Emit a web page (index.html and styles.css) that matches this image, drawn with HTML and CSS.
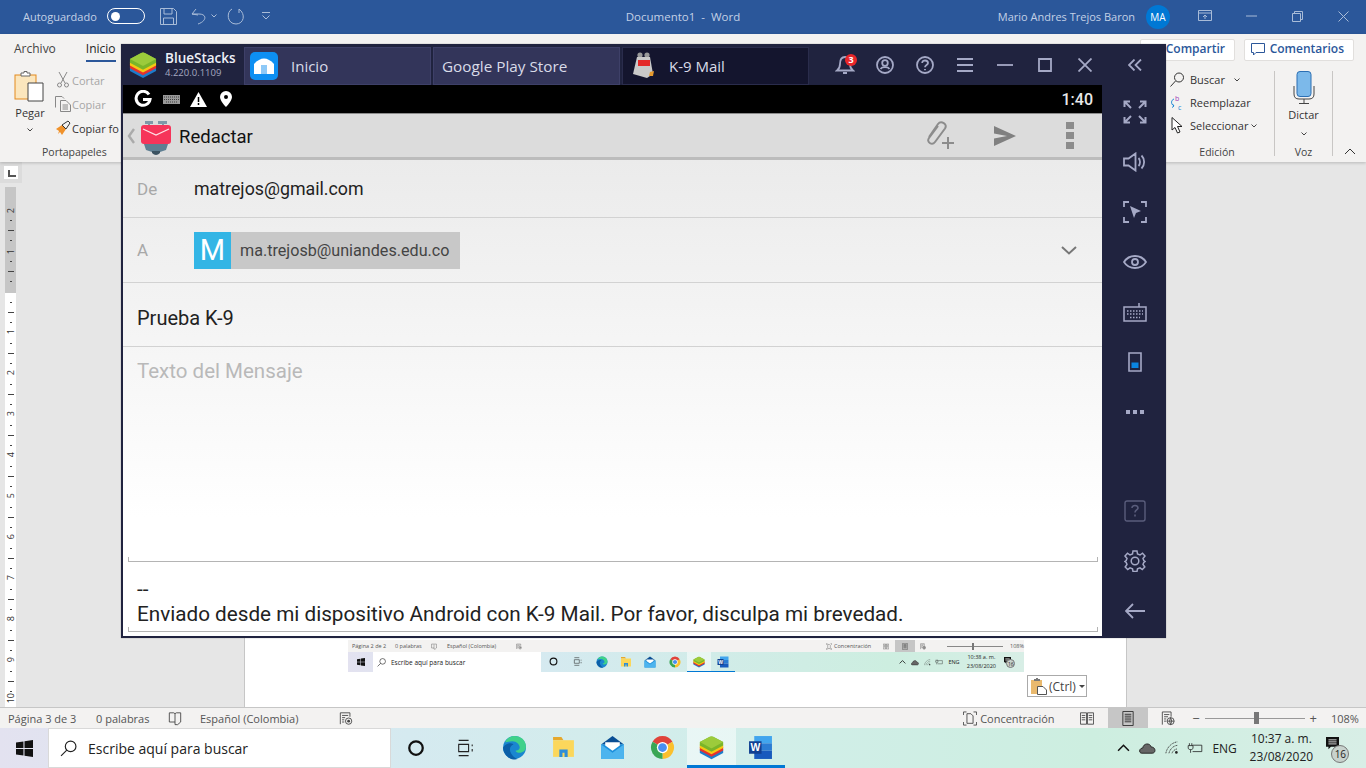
FILE: index.html
```html
<!DOCTYPE html>
<html lang="es">
<head>
    <meta charset="UTF-8">
    <meta name="viewport" content="width=device-width, initial-scale=1.0">
    <title>Documento1 - Word</title>
    <link rel="stylesheet" href="styles.css">
</head>
<body>
    <!-- iconos compartidos -->
    <svg class="sprites" aria-hidden="true">
        <symbol id="i-win" viewBox="0 0 16 16"><path fill="currentColor" d="M0 2.3 7 1.3V7.5H0ZM8 1.1 16 0V7.5H8ZM0 8.5H7V14.7L0 13.7ZM8 8.5H16V16L8 14.9Z"/></symbol>
        <symbol id="i-search" viewBox="0 0 16 16"><g fill="none" stroke="#222" stroke-width="1.1"><circle cx="10" cy="6" r="5"/><path d="M6.4 9.6 1 15"/></g></symbol>
        <symbol id="i-cortana" viewBox="0 0 16 16"><circle cx="8" cy="8" r="6" fill="none" stroke="#111" stroke-width="2"/></symbol>
        <symbol id="i-taskview" viewBox="0 0 20 20"><g fill="none" stroke="#222" stroke-width="1.2"><path d="M3 1.5H14M3 18.5H14M3 6H14V14H3ZM18 6V8M18 11V14"/></g></symbol>
        <symbol id="i-edge" viewBox="0 0 24 24"><circle cx="12" cy="12" r="11" fill="#1a86d0"/><path fill="#3fd18a" d="M3 7C5 2 10 1 12 1c6 0 11 4 11 10 0 4-3 6-6 6-2 0-4-1-4-2 3 0 4-2 4-3 0-3-3-6-7-6-3 0-6 1-7 1Z"/><path fill="#0b5fa8" d="M1 12c2-3 5-4 7-4 2 0 3 1 3 1-3 1-4 4-3 7s4 6 7 7c-2 .5-3 .5-4 .5C6 23 1 18 1 12Z"/></symbol>
        <symbol id="i-folder" viewBox="0 0 24 24"><path fill="#e6a82d" d="M2 2H10L12 5H2Z"/><path fill="#fbd75b" d="M2 5H22V21H2Z"/><path fill="#2f8ed8" d="M8 21V14H16V21H13V17H11V21Z"/></symbol>
        <symbol id="i-mail" viewBox="0 0 24 24"><path fill="#0a4e94" d="M12 1 23 9H1Z"/><path fill="#1b8fdc" d="M1 9H23V23H1Z"/><path fill="#fff" d="M5 7H19V10L12 15 5 10Z"/><path fill="#4db4ee" d="M1 9 12 17 23 9V23H1Z"/></symbol>
        <symbol id="i-chrome" viewBox="0 0 24 24"><path fill="#e0433a" d="M12 12 2.47 6.5A11 11 0 0 1 21.53 6.5Z"/><path fill="#fbc02d" d="M12 12 21.53 6.5A11 11 0 0 1 12 23Z"/><path fill="#3aa655" d="M12 12 12 23A11 11 0 0 1 2.47 6.5Z"/><circle cx="12" cy="12" r="5.4" fill="#fff"/><circle cx="12" cy="12" r="4.2" fill="#4a8ff0"/></symbol>
        <symbol id="i-bs" viewBox="0 0 30 30"><path fill="#1d7ccc" d="M1 17 15 10 29 17V21.5L15 29 1 21.5Z"/><path fill="#e5322d" d="M1 14 15 7 29 14V18.5L15 26 1 18.5Z"/><path fill="#f5c913" d="M1 11.5 15 5 29 11.5V15.5L15 23 1 15.5Z"/><path fill="#79b52a" d="M1 8.5 13 2.2Q15 1.2 17 2.2L29 8.5V12.5L15 20 1 12.5Z"/><path fill="#9ccb3b" d="M1 8.5 13 2.2Q15 1.2 17 2.2L29 8.5 16 15.5Q15 16 14 15.5Z"/></symbol>
        <symbol id="i-word" viewBox="0 0 24 24"><path fill="#41a5ee" d="M6 1H23V8H6Z"/><path fill="#2b7cd3" d="M6 8H23V15H6Z"/><path fill="#185abd" d="M6 15H23V23H6Z"/><path fill="#103f91" d="M1 6H13V18H1Z"/></symbol>
        <symbol id="i-book" viewBox="0 0 16 16"><path fill="none" stroke="#444" d="M1.5 1.5H6.5L8 2.5 9.5 1.5H14.5V12L11 15H8L8 2.5M8 12H1.5V1.5"/></symbol>
        <symbol id="i-macro" viewBox="0 0 16 16"><g fill="none" stroke="#444"><path d="M1.5 14.5V1.5H12.5V6M3.5 4.5H10.5M3.5 7H7M3.5 9.5H6M3.5 12H6"/><circle cx="11" cy="11" r="3.6"/></g><circle cx="11" cy="11" r="1.6" fill="#444"/></symbol>
        <symbol id="i-focus" viewBox="0 0 16 16"><path fill="none" stroke="#444" d="M.5 4V.5H4M12 .5H15.5V4M15.5 12V15.5H12M4 15.5H.5V12M4.5 2.5H9L11.5 5V13.5H4.5Z"/></symbol>
        <symbol id="i-read" viewBox="0 0 16 16"><path fill="none" stroke="#444" d="M.5 1.5H7.5V14.5H.5ZM8.5 1.5H15.5V14.5H8.5ZM2 4.5H6M2 7H6M2 9.5H6M10 4.5H14M10 7H14M10 9.5H14"/></symbol>
        <symbol id="i-print" viewBox="0 0 14 16"><path fill="none" stroke="#333" d="M1.5 .5H12.5V15.5H1.5ZM3.5 3.5H10.5M3.5 5.5H10.5M3.5 7.5H10.5M3.5 9.5H10.5M3.5 11.5H10.5"/></symbol>
        <symbol id="i-web" viewBox="0 0 16 16"><g fill="none" stroke="#444"><path d="M1.5 15V.5H11.5V6M3.5 3.5H9.5M3.5 6H8M3.5 8.5H6M3.5 11H6"/><circle cx="11" cy="11" r="4"/><path d="M7 11H15M11 7Q8.500 11 11 15Q13.500 11 11 7"/></g></symbol>
        <symbol id="i-cloud" viewBox="0 0 18 14"><path fill="#666" stroke="#222" d="M3 12.500C-.5 12.500 0 7 4 7 4.500 2 11.500 1 13 6 18 6 18 12.500 14 12.500Z"/></symbol>
        <symbol id="i-wifi" viewBox="0 0 16 16"><path fill="none" stroke="#333" stroke-dasharray="1.400 .7" d="M1 14C2 8 7 2 14 1M4.500 14C5.500 10 9 5.500 14 5M8 14C8.500 12 11 9.500 14 9"/><circle cx="13" cy="13" r="1.500" fill="#222"/></symbol>
        <symbol id="i-batt" viewBox="0 0 20 14"><path fill="none" stroke="#222" d="M7 3.500H18.500V11.500H7M3 1V4M6 1V4M1.500 4H7.500V7C7.500 8.500 6 9 4.500 9S1.500 8.500 1.500 7ZM4.500 9V13"/></symbol>
        <symbol id="i-notif" viewBox="0 0 16 16"><path fill="#111" d="M0 0H16V12H6L3 15V12H0Z"/><path stroke="#fff" d="M3 3.500H13M3 6H13M3 8.500H13"/></symbol>
        <symbol id="i-k9" viewBox="0 0 30 36"><path fill="#7e98a8" d="M4 1H12V4H9V7H7V4H4ZM17 1H26V4H23V7H21V4H17Z"/><path fill="#5f7f92" d="M1 18H29L25 30 19 32H11L5 30Z"/><path fill="#3c5361" d="M11 31H19V33Q15 37 11 33Z"/><rect x="0" y="5" width="30" height="19" rx="3" fill="#f6345a"/><path fill="none" stroke="#fff" stroke-width="1.300" d="M2 9 15 15 28 9" opacity=".85"/></symbol>
    </svg>

    <div class="word">
        <header class="titlebar">
            <div class="tb-left">
                <span class="autosave">Autoguardado</span>
                <span class="toggle"><i></i></span>
                <svg class="qa qa-save" viewBox="0 0 17 17"><path d="M.5.5H13.500L16.500 3.500V16.500H.5ZM4 .5V6H12V.5M3.500 16.500V10H13.500V16.500"/></svg>
                <svg class="qa qa-undo" viewBox="0 0 16 18"><path d="M1 7 5 2M1 7 7 8M1 7H8C16 7 16 14 7 17"/></svg>
                <svg class="qa qa-chev" viewBox="0 0 6 4"><path d="M.5.5 3 3 5.500.5"/></svg>
                <svg class="qa qa-redo" viewBox="0 0 18 18"><path d="M5 2C-1 5 0 17 9 17 17 17 19 7 12 2M12 2V6"/></svg>
                <svg class="qa qa-more" viewBox="0 0 8 8"><path d="M0 .5H8M.5 3.500 4 7 7.500 3.500"/></svg>
            </div>
            <div class="tb-title">Documento1&nbsp; -&nbsp; Word</div>
            <div class="tb-right">
                <span class="user">Mario Andres Trejos Baron</span>
                <span class="avatar">MA</span>
                <span class="winbtn"><svg class="qa" width="14" height="12" viewBox="0 0 14 12"><path d="M.5.500H13.500V10.500H.5ZM.5 3H13.500M7 9V5M5 7 7 5 9 7"/></svg></span>
                <span class="winbtn"><svg class="qa" width="11" height="2" viewBox="0 0 11 2"><path d="M0 1H11"/></svg></span>
                <span class="winbtn"><svg class="qa" width="11" height="11" viewBox="0 0 11 11"><path d="M.5 2.500H8.500V10.500H.5ZM2.500 2.500V.5H10.500V8.500H8.500"/></svg></span>
                <span class="winbtn"><svg class="qa" width="11" height="11" viewBox="0 0 11 11"><path d="M.5.5 10.500 10.500M10.500.5 .5 10.500"/></svg></span>
            </div>
        </header>

        <section class="ribbon">
            <div class="rb-tabs">
                <div class="rb-tabs-left">
                    <span class="rb-tab">Archivo</span>
                    <span class="rb-tab active">Inicio</span>
                </div>
                <div class="rb-tabs-right">
                    <span class="rb-btn share">Compartir</span>
                    <span class="rb-btn comments">
                        <svg width="14" height="13" viewBox="0 0 14 13"><path fill="none" stroke="#2b579a" d="M.5.5H13.500V9.500H5L2.500 12V9.500H.5Z"/></svg>
                        Comentarios
                    </span>
                </div>
            </div>
            <div class="rb-body">
                <div class="rb-group clip">
                    <div class="clip-main">
                        <div class="paste">
                            <svg width="32" height="32" viewBox="0 0 32 32"><rect x="1" y="4" width="21" height="24" fill="#fbe6bd" stroke="#e38a1f"/><path fill="#fff" stroke="#666" d="M7 5V2H10V0.500H13V2H16V5Z"/><path fill="#fff" stroke="#444" d="M14 12H29V30H14Z"/></svg>
                            <span class="paste-label">Pegar</span>
                            <svg class="chev" viewBox="0 0 6 4"><path d="M.5.5 3 3 5.500.5"/></svg>
                        </div>
                        <ul class="clip-list">
                            <li class="off"><svg width="14" height="16" viewBox="0 0 14 16"><g fill="none" stroke="#888"><path d="M3 0 9 11M11 0 5 11"/><circle cx="3.500" cy="13" r="2"/><circle cx="10.500" cy="13" r="2"/></g></svg>Cortar</li>
                            <li class="off"><svg width="16" height="16" viewBox="0 0 16 16"><path fill="none" stroke="#888" d="M.5 11.500V.5H7L9 2.500M5.500 4.500H11L15.500 9V15.500H5.500ZM7.500 9H13M7.500 11H13M7.500 13H13"/></svg>Copiar</li>
                            <li><svg width="16" height="16" viewBox="0 0 16 16"><path fill="#f0922b" d="M1 9 7 5 11 9 7 15 5 12 3 14 4 11Z"/><path fill="none" stroke="#333" d="M7 5 11 9 15 3 13 1Z"/></svg>Copiar fo</li>
                        </ul>
                    </div>
                    <div class="rb-label">Portapapeles</div>
                </div>
                <div class="rb-right">
                    <div class="rb-group edit">
                        <ul class="edit-list">
                            <li><svg width="14" height="15" viewBox="0 0 14 15"><g fill="none" stroke="#333"><circle cx="9" cy="5.500" r="4.500"/><path d="M5.500 9 .5 14.500"/></g></svg>Buscar<svg class="chev near" viewBox="0 0 6 4"><path d="M.5.5 3 3 5.500.5"/></svg></li>
                            <li><svg width="14" height="19" viewBox="0 0 14 19"><path fill="none" stroke="#1e88d6" d="M4 6C1 7 .5 11 4 13M2.500 11 4 13 2 14.500"/><text x="5" y="7.500" class="rp-b">b</text><text x="8" y="17" class="rp-c">c</text></svg>Reemplazar</li>
                            <li><svg width="14" height="17" viewBox="0 0 14 17"><path fill="#fff" stroke="#222" d="M2 .5V13L5 10.500 7.500 16 10 15 7.500 9.500H12Z"/></svg>Seleccionar<svg class="chev tight" viewBox="0 0 6 4"><path d="M.5.5 3 3 5.500.5"/></svg></li>
                        </ul>
                        <div class="rb-label">Edición</div>
                    </div>
                    <div class="rb-group voz">
                        <div class="dictar">
                            <svg width="22" height="34" viewBox="0 0 22 34"><rect x="4" y=".5" width="14" height="25" rx="3" fill="#7cb9ea" stroke="#2b6fb3"/><path fill="none" stroke="#444" d="M1 15V23Q1 28 6 28H16Q21 28 21 23V15M11 28V32M6 32.500H16"/></svg>
                            <span class="paste-label">Dictar</span>
                            <svg class="chev" viewBox="0 0 6 4"><path d="M.5.5 3 3 5.500.5"/></svg>
                        </div>
                        <div class="rb-label">Voz</div>
                    </div>
                    <div class="rb-collapse">
                        <svg width="12" height="7" viewBox="0 0 12 7"><path fill="none" stroke="#333" d="M1 6 6 1 11 6"/></svg>
                    </div>
                </div>
            </div>
        </section>

        <main class="docarea">
            <div class="gutter">
                <div class="ruler-corner"><span class="ruler-tab"></span></div>
                <div class="ruler">
                    <div class="ruler-top">
                        <span class="rnum"><b>2</b></span>
                        <span class="rnum"><b>1</b></span>
                    </div>
                    <div class="ruler-bot">
                        <span class="rnum"><b>1</b></span>
                        <span class="rnum"><b>2</b></span>
                        <span class="rnum"><b>3</b></span>
                        <span class="rnum"><b>4</b></span>
                        <span class="rnum"><b>5</b></span>
                        <span class="rnum"><b>6</b></span>
                        <span class="rnum"><b>7</b></span>
                        <span class="rnum"><b>8</b></span>
                        <span class="rnum"><b>9</b></span>
                        <span class="rnum"><b>10</b></span>
                    </div>
                </div>
            </div>
            <div class="page">
                <!-- captura pegada en el documento -->
                <div class="shot">
                    <div class="shot-status">
                        <span class="ms-a">Página 2 de 2</span>
                        <span class="ms-b">0 palabras</span>
                        <svg class="ms-book"><use href="#i-book"/></svg>
                        <span class="ms-c">Español (Colombia)</span>
                        <svg class="ms-macro"><use href="#i-macro"/></svg>
                        <span class="grow"></span>
                        <svg class="ms-ico"><use href="#i-focus"/></svg>
                        <span class="ms-d">Concentración</span>
                        <svg class="ms-ico ms-read"><use href="#i-read"/></svg>
                        <span class="ms-tile"><svg class="ms-ico"><use href="#i-print"/></svg></span>
                        <svg class="ms-ico ms-web"><use href="#i-web"/></svg>
                        <span class="ms-zoom"><i></i></span>
                        <span class="ms-e">108%</span>
                    </div>
                    <div class="taskbar mini">
                        <span class="tb-start"><svg><use href="#i-win"/></svg></span>
                        <span class="tb-search"><svg><use href="#i-search"/></svg>Escribe aquí para buscar</span>
                        <span class="tb-app"><svg class="sm"><use href="#i-cortana"/></svg></span>
                        <span class="tb-app"><svg class="sm"><use href="#i-taskview"/></svg></span>
                        <span class="tb-app"><svg><use href="#i-edge"/></svg></span>
                        <span class="tb-app"><svg><use href="#i-folder"/></svg></span>
                        <span class="tb-app"><svg><use href="#i-mail"/></svg></span>
                        <span class="tb-app"><svg><use href="#i-chrome"/></svg></span>
                        <span class="tb-app on"><svg><use href="#i-bs"/></svg></span>
                        <span class="tb-app open"><svg viewBox="0 0 24 24"><use href="#i-word"/><text x="7" y="15.800" text-anchor="middle" class="word-w">W</text></svg></span>
                        <span class="tray">
                            <svg class="t-up" viewBox="0 0 12 7"><path fill="none" stroke="#111" stroke-width="1.400" d="M1 6 6 1 11 6"/></svg>
                            <svg class="t-cloud"><use href="#i-cloud"/></svg>
                            <svg class="t-wifi"><use href="#i-wifi"/></svg>
                            <svg class="t-batt"><use href="#i-batt"/></svg>
                            <span class="t-lang">ENG</span>
                            <span class="t-clock"><span>10:38 a. m.</span><span>23/08/2020</span></span>
                            <span class="t-notif"><svg><use href="#i-notif"/></svg><em>16</em></span>
                        </span>
                    </div>
                </div>
                <div class="paste-tip">
                    <svg width="16" height="17" viewBox="0 0 16 17"><path fill="#e9b96e" d="M0 2H11V16H0Z"/><path fill="#777" d="M3 3V1H5V0H7V1H9V3Z"/><path fill="#fff" stroke="#555" d="M6.500 8.500H12L15.500 12V16.500H6.500Z"/></svg>
                    <span>(Ctrl)</span>
                    <i class="caret"></i>
                </div>
            </div>
            <div class="docfill"></div>
        </main>

        <footer class="statusbar">
            <span class="st-a">Página 3 de 3</span>
            <span class="st-b">0 palabras</span>
            <svg class="st-ico st-book"><use href="#i-book"/></svg>
            <span class="st-c">Español (Colombia)</span>
            <svg class="st-ico st-macro"><use href="#i-macro"/></svg>
            <span class="grow"></span>
            <svg class="st-ico"><use href="#i-focus"/></svg>
            <span class="st-d">Concentración</span>
            <svg class="st-ico st-read"><use href="#i-read"/></svg>
            <span class="st-tile"><svg class="st-ico"><use href="#i-print"/></svg></span>
            <svg class="st-ico st-web"><use href="#i-web"/></svg>
            <span class="st-zoom"><b>−</b><span class="st-track"><i></i></span><b>+</b></span>
            <span class="st-e">108%</span>
        </footer>

        <nav class="taskbar">
            <span class="tb-start"><svg><use href="#i-win"/></svg></span>
            <span class="tb-search"><svg><use href="#i-search"/></svg>Escribe aquí para buscar</span>
            <span class="tb-app"><svg class="sm"><use href="#i-cortana"/></svg></span>
            <span class="tb-app"><svg class="sm"><use href="#i-taskview"/></svg></span>
            <span class="tb-app"><svg><use href="#i-edge"/></svg></span>
            <span class="tb-app"><svg><use href="#i-folder"/></svg></span>
            <span class="tb-app"><svg><use href="#i-mail"/></svg></span>
            <span class="tb-app"><svg><use href="#i-chrome"/></svg></span>
            <span class="tb-app on"><svg><use href="#i-bs"/></svg></span>
            <span class="tb-app open"><svg viewBox="0 0 24 24"><use href="#i-word"/><text x="7" y="15.800" text-anchor="middle" class="word-w">W</text></svg></span>
            <span class="tray">
                <svg class="t-up" viewBox="0 0 12 7"><path fill="none" stroke="#111" stroke-width="1.400" d="M1 6 6 1 11 6"/></svg>
                <svg class="t-cloud"><use href="#i-cloud"/></svg>
                <svg class="t-wifi"><use href="#i-wifi"/></svg>
                <svg class="t-batt"><use href="#i-batt"/></svg>
                <span class="t-lang">ENG</span>
                <span class="t-clock"><span>10:37 a. m.</span><span>23/08/2020</span></span>
                <span class="t-notif"><svg><use href="#i-notif"/></svg><em>16</em></span>
            </span>
        </nav>
    </div>

    <!-- ventana de BlueStacks sobre Word -->
    <div class="bs">
        <div class="bs-title">
            <svg class="bs-logo"><use href="#i-bs"/></svg>
            <div class="bs-brand">
                <strong>BlueStacks</strong>
                <span>4.220.0.1109</span>
            </div>
            <div class="bs-tab first">
                <span class="home"><svg width="20" height="16" viewBox="0 0 20 16"><path fill="#fff" d="M0 6Q10-5 20 6V16H0Z"/><path fill="#8ec9f7" d="M7 7H13V16H7Z"/></svg></span>
                <span>Inicio</span>
            </div>
            <div class="bs-tab store"><span>Google Play Store</span></div>
            <div class="bs-tab current">
                <svg width="24" height="28" viewBox="0 0 24 28"><circle cx="8" cy="3" r="2.600" fill="#999"/><circle cx="15" cy="3" r="2.600" fill="#999"/><path fill="#c9c9c9" d="M5 5H18L21 22 15 26 8 24 1 22Z"/><path fill="#e32929" d="M6 8H18V14H6Z"/><path fill="#e69a2e" d="M18 20 22 19 21 24 17 24Z"/></svg>
                <span>K-9 Mail</span>
            </div>
            <div class="bs-tools">
                <span class="bs-tool bell">
                    <svg width="20" height="20" viewBox="0 0 20 20"><path d="M10 2C5.500 2 5 6 5 9S4 14 2 15.500H18C16 14 15 12 15 9S14.500 2 10 2ZM8 18H12"/></svg>
                    <em>3</em>
                </span>
                <span class="bs-tool"><svg width="18" height="18" viewBox="0 0 18 18"><circle cx="9" cy="9" r="8"/><circle cx="9" cy="7" r="2.800"/><path d="M4.500 13C6 10.500 12 10.500 13.500 13"/></svg></span>
                <span class="bs-tool"><svg width="18" height="18" viewBox="0 0 18 18"><circle cx="9" cy="9" r="8"/><path d="M6.200 7C6.200 3.500 12 3.800 12 7 12 9 9 9 9 11.200M9 13V14.200"/></svg></span>
                <span class="bs-tool"><svg width="16" height="14" viewBox="0 0 16 14"><path d="M0 1H16M0 7H16M0 13H16"/></svg></span>
                <span class="bs-tool"><svg width="16" height="2" viewBox="0 0 16 2"><path d="M0 1H16"/></svg></span>
                <span class="bs-tool"><svg width="14" height="14" viewBox="0 0 14 14"><path d="M1 1H13V13H1Z"/></svg></span>
                <span class="bs-tool"><svg width="14" height="14" viewBox="0 0 14 14"><path d="M.5.5 13.500 13.500M13.500.5 .5 13.500"/></svg></span>
                <span class="bs-tool collapse"><svg width="14" height="12" viewBox="0 0 14 12"><path d="M6.500.5 1 6 6.500 11.500M13 .5 7.500 6 13 11.500"/></svg></span>
            </div>
        </div>

        <div class="bs-body">
            <div class="screen">
                <div class="android-status">
                    <svg class="a-g" width="18" height="18" viewBox="0 0 18 18"><path fill="none" stroke="#fff" stroke-width="3" d="M15 4.500A7 7 0 1 0 16 9.500H9"/></svg>
                    <svg class="a-kb" width="17" height="9" viewBox="0 0 17 9"><path fill="#999" d="M0 0H17V9H0Z"/><path stroke="#000" stroke-width=".6" stroke-dasharray="1 1" d="M1 2H16M1 4.500H16M3 7H14"/></svg>
                    <svg class="a-warn" width="17" height="15" viewBox="0 0 17 15"><path fill="#fff" d="M8.500 0 17 15H0Z"/><path stroke="#000" stroke-width="1.500" d="M8.500 5V10M8.500 11V13"/></svg>
                    <svg class="a-pin" width="12" height="16" viewBox="0 0 12 16"><path fill="#fff" fill-rule="evenodd" d="M6 0A6 6 0 0 1 12 6C12 10 6 16 6 16S0 10 0 6A6 6 0 0 1 6 0ZM6 4A2 2 0 1 0 6 8 2 2 0 0 0 6 4Z"/></svg>
                    <span class="a-time">1:40</span>
                </div>
                <div class="actionbar">
                    <svg class="ab-back" width="8" height="16" viewBox="0 0 8 16"><path fill="none" stroke="#aaa" stroke-width="2.400" d="M7 1 2 8 7 15"/></svg>
                    <svg class="ab-k9" width="30" height="36"><use href="#i-k9"/></svg>
                    <span class="ab-title">Redactar</span>
                    <span class="grow"></span>
                    <svg class="ab-attach" width="30" height="29" viewBox="0 0 30 29"><g fill="none" stroke="#8c8c8c" stroke-width="2"><path d="M4 16 13 3C16-1 23 3 20 7.500L10 21C7 25 1 21 4 17L13 5"/><path d="M23 16V28M17 22H29"/></g></svg>
                    <svg class="ab-send" width="22" height="20" viewBox="0 0 22 20"><path fill="#808080" d="M0 0 22 10 0 20V12.500L13 10 0 7.500Z"/></svg>
                    <span class="ab-more"><i></i><i></i><i></i></span>
                </div>
                <div class="compose">
                    <div class="row row-from">
                        <span class="row-label">De</span>
                        <span class="row-value">matrejos@gmail.com</span>
                    </div>
                    <div class="row row-to">
                        <span class="row-label">A</span>
                        <span class="chip"><span class="chip-tile">M</span><span class="chip-text">ma.trejosb@uniandes.edu.co</span></span>
                        <span class="grow"></span>
                        <svg class="row-chev" width="16" height="9" viewBox="0 0 16 9"><path fill="none" stroke="#777" stroke-width="2" d="M1 1 8 7.500 15 1"/></svg>
                    </div>
                    <div class="row row-subject">Prueba K-9</div>
                    <div class="row-body">
                        <div class="body-field"><span class="placeholder">Texto del Mensaje</span></div>
                        <div class="signature">
                            <span>--</span>
                            <span>Enviado desde mi dispositivo Android con K-9 Mail. Por favor, disculpa mi brevedad.</span>
                        </div>
                    </div>
                </div>
            </div>
            <aside class="side">
                <span class="side-btn"><svg width="24" height="24" viewBox="0 0 24 24"><path d="M1.500 1.500 8 8M1.500 7V1.500H7M22.500 1.500 16 8M17 1.500H22.500V7M1.500 22.500 8 16M1.500 17V22.500H7M22.500 22.500 16 16M22.500 17V22.500H17" stroke-width="2"/></svg></span>
                <span class="side-btn"><svg width="24" height="20" viewBox="0 0 24 20"><path d="M1 6.500H5.500L12.500 1.500V18.500L5.500 13.500H1ZM15.500 6C17.500 8 17.500 12 15.500 14M18.500 3.500C22 7 22 13 18.500 16.500" stroke-width="1.800"/></svg></span>
                <span class="side-btn"><svg width="24" height="22" viewBox="0 0 24 22"><path d="M1 6V1H6M18 1H23V6M1 16V21H6M18 21H23V16" stroke-width="1.800"/><path class="fill" d="M7 5 18 10 13 12 11 17Z"/></svg></span>
                <span class="side-btn"><svg width="24" height="16" viewBox="0 0 24 16"><path d="M1 8C6 0 18 0 23 8 18 16 6 16 1 8Z" stroke-width="1.800"/><circle cx="12" cy="8" r="3" stroke-width="1.800"/></svg></span>
                <span class="side-btn"><svg width="24" height="20" viewBox="0 0 24 20"><path d="M1 5H23V19H1ZM16 5V1" stroke-width="1.500"/><path d="M4 9H20M4 12H20M7 15.500H17" stroke-width="1.500" stroke-dasharray="1.500 1.500"/></svg></span>
                <span class="side-btn"><svg width="14" height="20" viewBox="0 0 14 20"><path d="M1 1H13V19H1Z" stroke-width="1.600"/><path fill="#0a84e0" stroke="none" d="M3.500 10.500H10.500V16H3.500Z"/></svg></span>
                <span class="side-btn"><svg width="18" height="4" viewBox="0 0 18 4"><path class="fill" d="M0 0H4V4H0ZM7 0H11V4H7ZM14 0H18V4H14Z"/></svg></span>
                <span class="grow"></span>
                <span class="side-btn dim"><svg width="22" height="22" viewBox="0 0 22 22"><rect x="1" y="1" width="20" height="20" rx="2" stroke-width="1.400"/><path d="M8 8C8 4.500 14 4.800 14 8 14 10 11 10 11 12.500M11 14.500V16.500" stroke-width="1.600"/></svg></span>
                <span class="side-btn"><svg width="22" height="22" viewBox="0 0 22 22"><path d="M9 1H13L13.500 4 16 5 18.500 3.200 21 6 19 8.400 19.800 10.500 21 11.500 19.800 12.500 19 14.500 20.800 17 18.300 19.500 16 17.800 13.500 18.800 13 21.500H9L8.500 18.800 6 17.800 3.700 19.500 1.200 17 3 14.500 2.200 12.500 1 11.500 2.200 10.500 3 8.400 1 6 3.500 3.200 6 5 8.500 4Z" stroke-width="1.500"/><circle cx="11" cy="11" r="3.800" stroke-width="1.500"/></svg></span>
                <span class="side-btn"><svg width="20" height="16" viewBox="0 0 20 16"><path d="M8 1 1 8 8 15M1 8H20" stroke-width="1.800"/></svg></span>
            </aside>
        </div>
    </div>
</body>
</html>
```

FILE: styles.css
```css
* {
    box-sizing: border-box;
}
html, body {
    margin: 0;
    height: 100%;
    overflow: hidden;
}
body {
    font-family: "Open Sans", "Noto Sans", sans-serif;
    font-size: 11px;
    color: #333;
    position: relative;
}
ul {
    list-style: none;
    margin: 0;
    padding: 0;
}
i, em {
    font-style: normal;
}
.sprites {
    position: absolute;
    width: 0;
    height: 0;
}
.grow {
    flex: 1;
}
.word {
    display: flex;
    flex-direction: column;
    height: 768px;
}

/* Barra de titulo */
.titlebar {
    height: 34px;
    padding-bottom: 2px;
    background-color: #2b579a;
    color: #c3d1e6;
    display: grid;
    grid-template-columns: 1fr auto 1fr;
    align-items: center;
}
.tb-left {
    display: flex;
    align-items: center;
    padding-left: 23px;
}
.autosave {
    width: 84px;
    white-space: nowrap;
}
.toggle {
    width: 38px;
    height: 16px;
    border: 1px solid #fff;
    border-radius: 8px;
    display: flex;
    align-items: center;
    padding-left: 3px;
}
.toggle i {
    width: 9px;
    height: 9px;
    border-radius: 50%;
    background-color: #fff;
}
.qa {
    fill: none;
    stroke: #a9bcd8;
    stroke-width: 1;
}
.qa-save { width: 17px; height: 17px; margin-left: 15px; }
.qa-undo { width: 16px; height: 18px; margin-left: 14px; }
.qa-chev { width: 6px; height: 4px; margin-left: 4px; }
.qa-redo { width: 18px; height: 18px; margin-left: 10px; }
.qa-more { width: 8px; height: 8px; margin-left: 17px; }
.tb-title {
    font-size: 11.5px;
}
.tb-right {
    display: flex;
    align-items: center;
    justify-content: flex-end;
}
.user {
    white-space: nowrap;
}
.avatar {
    width: 24px;
    height: 24px;
    border-radius: 50%;
    background-color: #0078d4;
    color: #fff;
    font-size: 10px;
    display: flex;
    align-items: center;
    justify-content: center;
    margin: 1px 12px 0 11px;
}
.winbtn {
    width: 46px;
    display: flex;
    justify-content: center;
}

/* Cinta */
.ribbon {
    height: 128px;
    background-color: #f3f2f1;
    display: flex;
    flex-direction: column;
    box-shadow: 0 1px 3px rgba(0,0,0,0.2);
    position: relative;
    z-index: 1;
}
.rb-tabs {
    height: 30px;
    display: flex;
    justify-content: space-between;
}
.rb-tabs-left {
    display: flex;
    padding-left: 14px;
    gap: 30px;
}
.rb-tab {
    height: 28px;
    line-height: 30px;
    font-size: 12px;
    color: #444;
}
.rb-tab.active {
    color: #222;
    border-bottom: 2px solid #2b579a;
}
.rb-tabs-right {
    display: flex;
    gap: 9px;
    padding: 5px 12px 0 0;
}
.rb-btn {
    height: 22px;
    line-height: 18px;
    background-color: #fff;
    border: 1px solid #e1dfdd;
    border-radius: 2px;
    color: #2b579a;
    font-size: 12px;
    font-weight: 600;
    display: flex;
    align-items: center;
    justify-content: flex-end;
    white-space: nowrap;
    padding: 0 9px 2px 0;
}
.share {
    width: 95px;
}
.comments {
    width: 110px;
    gap: 5px;
}
.rb-body {
    flex: 1;
    display: flex;
    justify-content: space-between;
}
.rb-group {
    display: flex;
    flex-direction: column;
}
.rb-label {
    height: 20px;
    margin-top: auto;
    text-align: center;
    font-size: 10.5px;
    color: #444;
    line-height: 20px;
}
.clip {
    width: 151px;
}
.clip-main {
    display: flex;
    padding: 7px 0 0 13px;
}
.paste, .dictar {
    display: flex;
    flex-direction: column;
    align-items: center;
    width: 34px;
}
.paste-label {
    margin-top: 2px;
    font-size: 11px;
}
.chev {
    width: 6px;
    height: 4px;
    fill: none;
    stroke: #444;
    margin-top: 8px;
    flex: none;
}
.clip-list {
    margin: -3px 0 0 8px;
    font-size: 11px;
    white-space: nowrap;
}
.clip-list li {
    height: 24px;
    display: flex;
    align-items: center;
}
.clip-list li svg {
    width: 16px;
    margin-right: 1px;
}
.clip-list .off {
    color: #a6a6a6;
}
.clip .rb-label {
    text-align: left;
    padding-left: 42px;
}
.rb-right {
    display: flex;
}
.edit {
    width: 105px;
    border-right: 1px solid #c8c6c4;
    margin: 7px 0 6px;
}
.edit-list {
    margin-top: -3px;
    font-size: 11px;
    white-space: nowrap;
}
.edit-list li {
    height: 23px;
    display: flex;
    align-items: center;
}
.edit-list li > svg:first-child {
    margin-right: 6px;
}
.near { margin: 0 0 0 9px; }
.tight { margin: 0 0 0 3px; }
.word-w {
    font: bold 10px "Liberation Sans", sans-serif;
    fill: #fff;
}
.rp-b {
    font: 7px "Open Sans", sans-serif;
    fill: #a03ab5;
}
.rp-c {
    font: 7px "Open Sans", sans-serif;
    fill: #1e88d6;
}
.edit .rb-label {
    padding-right: 10px;
    margin-bottom: -6px;
}
.voz {
    width: 58px;
    border-right: 1px solid #c8c6c4;
    margin: 7px 0 6px;
}
.voz .rb-label {
    margin-bottom: -6px;
}
.dictar {
    width: 100%;
}
.dictar .chev {
    margin-top: 10px;
}
.rb-collapse {
    width: 33px;
    display: flex;
    justify-content: center;
    align-items: flex-end;
    padding-bottom: 7px;
}

/* Area del documento */
.docarea {
    flex: 1;
    display: flex;
    background-color: #e6e6e6;
    min-height: 0;
}
.gutter {
    width: 244px;
    display: flex;
    flex-direction: column;
}
.ruler-corner {
    width: 22px;
    height: 21px;
    background-color: #dcdcdc;
    display: flex;
    align-items: center;
    justify-content: center;
}
.ruler-tab {
    width: 14px;
    height: 13px;
    background-color: #fff;
    border-left: 4px solid #fff;
    border-top: 4px solid #fff;
}
.ruler-tab::after {
    content: "";
    display: block;
    width: 6px;
    height: 5px;
    border-left: 2px solid #555;
    border-bottom: 2px solid #555;
}
.ruler {
    flex: 1;
    width: 11px;
    margin: 4px 0 0 5px;
    display: flex;
    flex-direction: column;
    font-size: 9px;
    color: #333;
    overflow: hidden;
}
.ruler-top, .ruler-bot {
    display: flex;
    flex-direction: column;
}
.ruler-top {
    height: 106px;
    background-color: #c6c6c6;
    justify-content: flex-end;
}
.ruler-bot {
    flex: 1;
    background-color: #fff;
}
.rnum {
    height: 41px;
    flex: none;
    display: flex;
    justify-content: center;
    background:
        linear-gradient(#444, #444) 50% 9px / 2px 1px no-repeat,
        linear-gradient(#444, #444) 50% 19px / 6px 1px no-repeat,
        linear-gradient(#444, #444) 50% 29px / 2px 1px no-repeat;
}
.ruler-bot .rnum {
    align-items: flex-end;
}
.ruler-top .rnum {
    align-items: flex-start;
}
.rnum b {
    font-weight: 400;
    line-height: 11px;
    writing-mode: vertical-rl;
    transform: rotate(180deg);
}
.ruler-top .rnum b {
    margin-top: -3px;
}
.page {
    width: 883px;
    background-color: #fff;
    border-left: 1px solid #c6c6c6;
    border-right: 1px solid #c6c6c6;
    display: flex;
    flex-direction: column;
    justify-content: flex-end;
    position: relative;
    padding: 0 0 35px 103px;
}
.docfill {
    flex: 1;
}

/* Captura pegada */
.shot {
    width: 676px;
    font-size: 5.5px;
    color: #555;
}
.shot-status {
    height: 12px;
    background-color: #f3f2f1;
    display: flex;
    align-items: center;
    white-space: nowrap;
}
.ms-a { margin-left: 4px; width: 34px; }
.ms-b { margin-left: 9px; width: 26px; }
.ms-book { width: 6px; height: 7px; margin-left: 10px; }
.ms-c { margin-left: 10px; width: 48px; }
.ms-macro { width: 6px; height: 7px; margin-left: 21px; }
.ms-ico { width: 6px; height: 7px; }
.ms-d { margin-left: 2px; width: 38px; }
.ms-read { margin-left: 11px; }
.ms-tile {
    width: 20px;
    height: 12px;
    background-color: #c6c6c6;
    display: flex;
    align-items: center;
    justify-content: center;
    margin-left: 6px;
}
.ms-web { margin-left: 5px; }
.ms-zoom {
    width: 56px;
    height: 1px;
    background-color: #888;
    margin-left: 21px;
    position: relative;
}
.ms-zoom i {
    position: absolute;
    left: 25px;
    top: -3px;
    width: 2px;
    height: 7px;
    background-color: #777;
}
.ms-e { margin-left: 7px; }

/* Barra de tareas */
.taskbar {
    height: 40px;
    display: flex;
    align-items: stretch;
    color: #222;
    background: linear-gradient(90deg, #e3e2f0 0, #d5eaf0 30%, #d1eee9 55%, #cdeee0 80%, #d8eee6 100%);
}
.tb-start {
    width: 48px;
    display: flex;
    align-items: center;
    justify-content: center;
    color: #111;
}
.tb-start svg {
    width: 17px;
    height: 17px;
}
.tb-search {
    width: 343px;
    background-color: #fff;
    border: 1px solid #d9d9d9;
    display: flex;
    align-items: center;
    font-size: 14px;
    white-space: nowrap;
    padding-left: 11px;
    gap: 11px;
}
.tb-search svg {
    width: 17px;
    height: 17px;
}
.tb-app {
    width: 49.3px;
    display: flex;
    align-items: center;
    justify-content: center;
    border-bottom: 3px solid transparent;
    padding-top: 2px;
}
.tb-app svg {
    width: 25px;
    height: 25px;
}
.tb-app svg.sm {
    width: 18px;
    height: 18px;
}
.tb-app.on {
    background-color: rgba(255,255,255,0.5);
    border-bottom-color: #0078d4;
}
.tb-app.open {
    border-bottom-color: #0078d4;
}
.tray {
    flex: 1;
    display: flex;
    align-items: center;
    padding-left: 327px;
    font-size: 12px;
}
.t-up { width: 13px; height: 8px; margin-left: 5px; }
.t-cloud { width: 17px; height: 14px; margin-left: 9px; }
.t-wifi { width: 14px; height: 14px; margin-left: 9px; }
.t-batt { width: 16px; height: 12px; margin-left: 8px; }
.t-lang { margin-left: 9px; width: 36px; }
.t-clock {
    width: 66px;
    display: flex;
    flex-direction: column;
    text-align: center;
    line-height: 18px;
}
.t-notif {
    width: 22px;
    height: 26px;
    margin-left: 12px;
    position: relative;
}
.t-notif svg {
    width: 13px;
    height: 13px;
    display: block;
    margin-top: 2px;
}
.t-notif em {
    position: absolute;
    left: 5px;
    top: 10px;
    width: 18px;
    height: 18px;
    border-radius: 50%;
    background-color: #c8d2cd;
    border: 1px solid #777;
    font-size: 10px;
    line-height: 16px;
    text-align: center;
}

/* Version en miniatura */
.taskbar.mini {
    height: 20px;
    font-size: 6px;
    background: linear-gradient(90deg, #e3e2f0 0, #d5eaf0 30%, #cdeee0 80%, #d8eee6 100%);
}
.mini .tb-start {
    width: 25px;
}
.mini .tb-start svg {
    width: 8px;
    height: 8px;
}
.mini .tb-search {
    width: 168px;
    font-size: 6.5px;
    padding-left: 4px;
    gap: 5px;
    border: 0;
}
.mini .tb-search svg {
    width: 9px;
    height: 9px;
}
.mini .tb-app {
    width: 24.3px;
    border-bottom-width: 1px;
    padding-top: 0;
}
.mini .tb-app svg {
    width: 12px;
    height: 12px;
}
.mini .tb-app svg.sm {
    width: 9px;
    height: 9px;
}
.mini .tray {
    padding-left: 164px;
    font-size: 5.5px;
}
.mini .t-up { width: 7px; height: 4px; margin-left: 0; }
.mini .t-cloud { width: 8px; height: 7px; margin-left: 5px; }
.mini .t-wifi { width: 7px; height: 7px; margin-left: 5px; }
.mini .t-batt { width: 8px; height: 6px; margin-left: 4px; }
.mini .t-lang { margin-left: 5px; width: 18px; }
.mini .t-clock { width: 30px; line-height: 9px; }
.mini .t-notif { width: 11px; height: 13px; margin-left: 8px; }
.mini .t-notif svg { width: 7px; height: 7px; margin-top: 1px; }
.mini .t-notif em {
    left: 2px;
    top: 3px;
    width: 9px;
    height: 9px;
    font-size: 5px;
    line-height: 8px;
}

/* Opciones de pegado */
.paste-tip {
    position: absolute;
    left: 782px;
    bottom: 10px;
    width: 60px;
    height: 22px;
    border: 1px solid #aaa;
    background-color: #fff;
    display: flex;
    align-items: center;
    padding-left: 3px;
    gap: 2px;
    font-size: 12px;
    color: #444;
}
.caret {
    border-top: 3px solid #444;
    border-left: 3px solid transparent;
    border-right: 3px solid transparent;
    margin-left: 1px;
}

/* Barra de estado */
.statusbar {
    height: 21px;
    background-color: #f3f2f1;
    border-top: 1px solid #c6c6c6;
    display: flex;
    align-items: center;
    color: #555;
    font-size: 11px;
    white-space: nowrap;
}
.st-ico {
    width: 14px;
    height: 15px;
    flex: none;
}
.st-a { margin-left: 8px; width: 68px; }
.st-b { margin-left: 20px; width: 53px; }
.st-book { margin-left: 19px; }
.st-c { margin-left: 18px; width: 99px; }
.st-macro { margin-left: 40px; }
.st-d { margin-left: 3px; width: 75px; }
.st-read { margin-left: 25px; }
.st-tile {
    width: 40px;
    height: 20px;
    margin-left: 14px;
    background-color: #c6c6c6;
    display: flex;
    align-items: center;
    justify-content: center;
}
.st-web { margin-left: 13px; }
.st-zoom {
    display: flex;
    align-items: center;
    margin-left: 17px;
    gap: 5px;
}
.st-zoom b {
    font-weight: 400;
    font-size: 13px;
}
.st-track {
    width: 100px;
    height: 1px;
    background-color: #999;
    position: relative;
}
.st-track i {
    position: absolute;
    left: 49px;
    top: -6px;
    width: 5px;
    height: 12px;
    background-color: #777;
}
.st-e { margin-left: 14px; width: 35px; }

/* Ventana de BlueStacks */
.bs {
    position: absolute;
    left: 121px;
    top: 44px;
    width: 1045px;
    height: 594px;
    background-color: #20233f;
    display: flex;
    flex-direction: column;
    box-shadow: 0 0 1px rgba(0,0,0,0.4);
    z-index: 2;
}
.bs-title {
    height: 41px;
    flex: none;
    display: flex;
    align-items: flex-end;
    color: #d9dbe8;
    padding-left: 8px;
}
.bs-logo {
    width: 28px;
    height: 28px;
    margin-bottom: 6px;
}
.bs-brand {
    width: 87px;
    height: 41px;
    padding: 6px 0 0 8px;
    display: flex;
    flex-direction: column;
    white-space: nowrap;
}
.bs-brand strong {
    font-size: 13.5px;
    font-weight: 600;
    line-height: 17px;
    color: #eef0f8;
}
.bs-brand span {
    font-size: 9.5px;
    line-height: 12px;
    color: #a6a9c0;
}
.bs-tab {
    height: 38px;
    width: 187px;
    margin-right: 2px;
    background-color: #33355a;
    border: 1px solid #3e4068;
    font-size: 15px;
    display: flex;
    align-items: center;
    white-space: nowrap;
}
.bs-tab.first {
    padding-left: 5px;
    gap: 13px;
}
.bs-tab.store {
    padding-left: 8px;
    font-size: 15.3px;
}
.bs-tab.current {
    background-color: #14152e;
    border-color: #2a2c4c;
    padding-left: 9px;
    gap: 13px;
}
.home {
    width: 28px;
    height: 28px;
    border-radius: 5px;
    background-color: #0d8ff2;
    display: flex;
    align-items: center;
    justify-content: center;
}
.bs-tools {
    display: flex;
    height: 41px;
    align-items: center;
    margin-left: 14px;
}
.bs-tool {
    width: 40px;
    display: flex;
    justify-content: center;
    position: relative;
}
.bs-tool svg {
    fill: none;
    stroke: #a5a9c6;
    stroke-width: 1.8;
}
.bs-tool.collapse {
    margin-left: 10px;
}
.bell em {
    position: absolute;
    left: 20px;
    top: -1px;
    width: 12px;
    height: 12px;
    border-radius: 50%;
    background-color: #e8262a;
    color: #fff;
    font-size: 9px;
    font-weight: 700;
    line-height: 12px;
    text-align: center;
}
.bs-body {
    flex: 1;
    display: flex;
    min-height: 0;
    padding-bottom: 2px;
}

/* Pantalla de Android */
.screen {
    width: 979px;
    margin-left: 2px;
    display: flex;
    flex-direction: column;
    font-family: Roboto, sans-serif;
    background-color: #000;
}
.android-status {
    height: 28px;
    flex: none;
    background-color: #000;
    display: flex;
    align-items: center;
    padding: 0 9px 0 11px;
}
.a-kb { margin-left: 11px; }
.a-warn { margin-left: 10px; }
.a-pin { margin-left: 13px; }
.a-time {
    margin-left: auto;
    color: #e8e8e8;
    font-size: 16px;
    font-weight: 500;
}
.actionbar {
    height: 47px;
    flex: none;
    background-color: #dcdcdc;
    border-top: 1px solid #8c8c8c;
    border-bottom: 3px solid #bcbcbc;
    display: flex;
    align-items: center;
    padding-left: 4px;
}
.ab-k9 { margin-left: 6px; margin-top: 4px; }
.ab-title {
    margin: 2px 0 0 8px;
    font-size: 18.500px;
    color: #111;
}
.ab-send { margin-left: 39px; }
.ab-more {
    display: flex;
    flex-direction: column;
    gap: 3px;
    margin: 0 28px 0 50px;
}
.ab-more i {
    width: 8px;
    height: 7px;
    background-color: #8c8c8c;
}
.compose {
    flex: 1;
    display: flex;
    flex-direction: column;
    background: linear-gradient(#ebebeb, #fff 75%);
    min-height: 0;
}
.row {
    display: flex;
    align-items: center;
    padding-left: 14px;
    border-bottom: 1px solid #d2d2d2;
    flex: none;
}
.row-from {
    height: 58px;
}
.row-to {
    height: 65px;
    padding-right: 25px;
}
.row-subject {
    height: 64px;
    padding-top: 6px;
    font-size: 20px;
    color: #222;
}
.row-label {
    width: 57px;
    font-size: 17px;
    color: #a8a8a8;
}
.row-value {
    font-size: 17.800px;
    color: #222;
}
.chip {
    height: 37px;
    width: 266px;
    background-color: #c8c8c8;
    display: flex;
    align-items: center;
    color: #444;
    font-size: 16.150px;
}
.chip-tile {
    width: 37px;
    height: 37px;
    background-color: #33b5e5;
    color: #fff;
    font-size: 29px;
    line-height: 37px;
    text-align: center;
}
.chip-text {
    margin-left: 9px;
    white-space: nowrap;
}
.row-body {
    flex: 1;
    display: flex;
    flex-direction: column;
    padding: 0 4px 4px 5px;
    min-height: 0;
}
.body-field, .signature {
    background:
        linear-gradient(#b4b4b4, #b4b4b4) left bottom / 1px 4px no-repeat,
        linear-gradient(#b4b4b4, #b4b4b4) right bottom / 1px 4px no-repeat;
}
.body-field {
    height: 215px;
    padding: 12px 0 0 9px;
    border-bottom: 1px solid #b4b4b4;
    flex: none;
}
.placeholder {
    font-size: 20.500px;
    color: #b9b9b9;
}
.signature {
    flex: 1;
    display: flex;
    flex-direction: column;
    justify-content: flex-end;
    padding-left: 9px;
    padding-bottom: 4px;
    border-bottom: 1px solid #b4b4b4;
    font-size: 20.700px;
    line-height: 25px;
    color: #222;
    white-space: nowrap;
}

/* Barra lateral */
.side {
    flex: 1;
    display: flex;
    flex-direction: column;
    padding: 2px 0 0 2px;
}
.side-btn {
    height: 50px;
    flex: none;
    display: flex;
    align-items: center;
    justify-content: center;
}
.side-btn svg {
    fill: none;
    stroke: #a5a9c6;
}
.side-btn .fill {
    fill: #a5a9c6;
    stroke: none;
}
.side-btn.dim svg {
    stroke: #5a5d7c;
}
```
